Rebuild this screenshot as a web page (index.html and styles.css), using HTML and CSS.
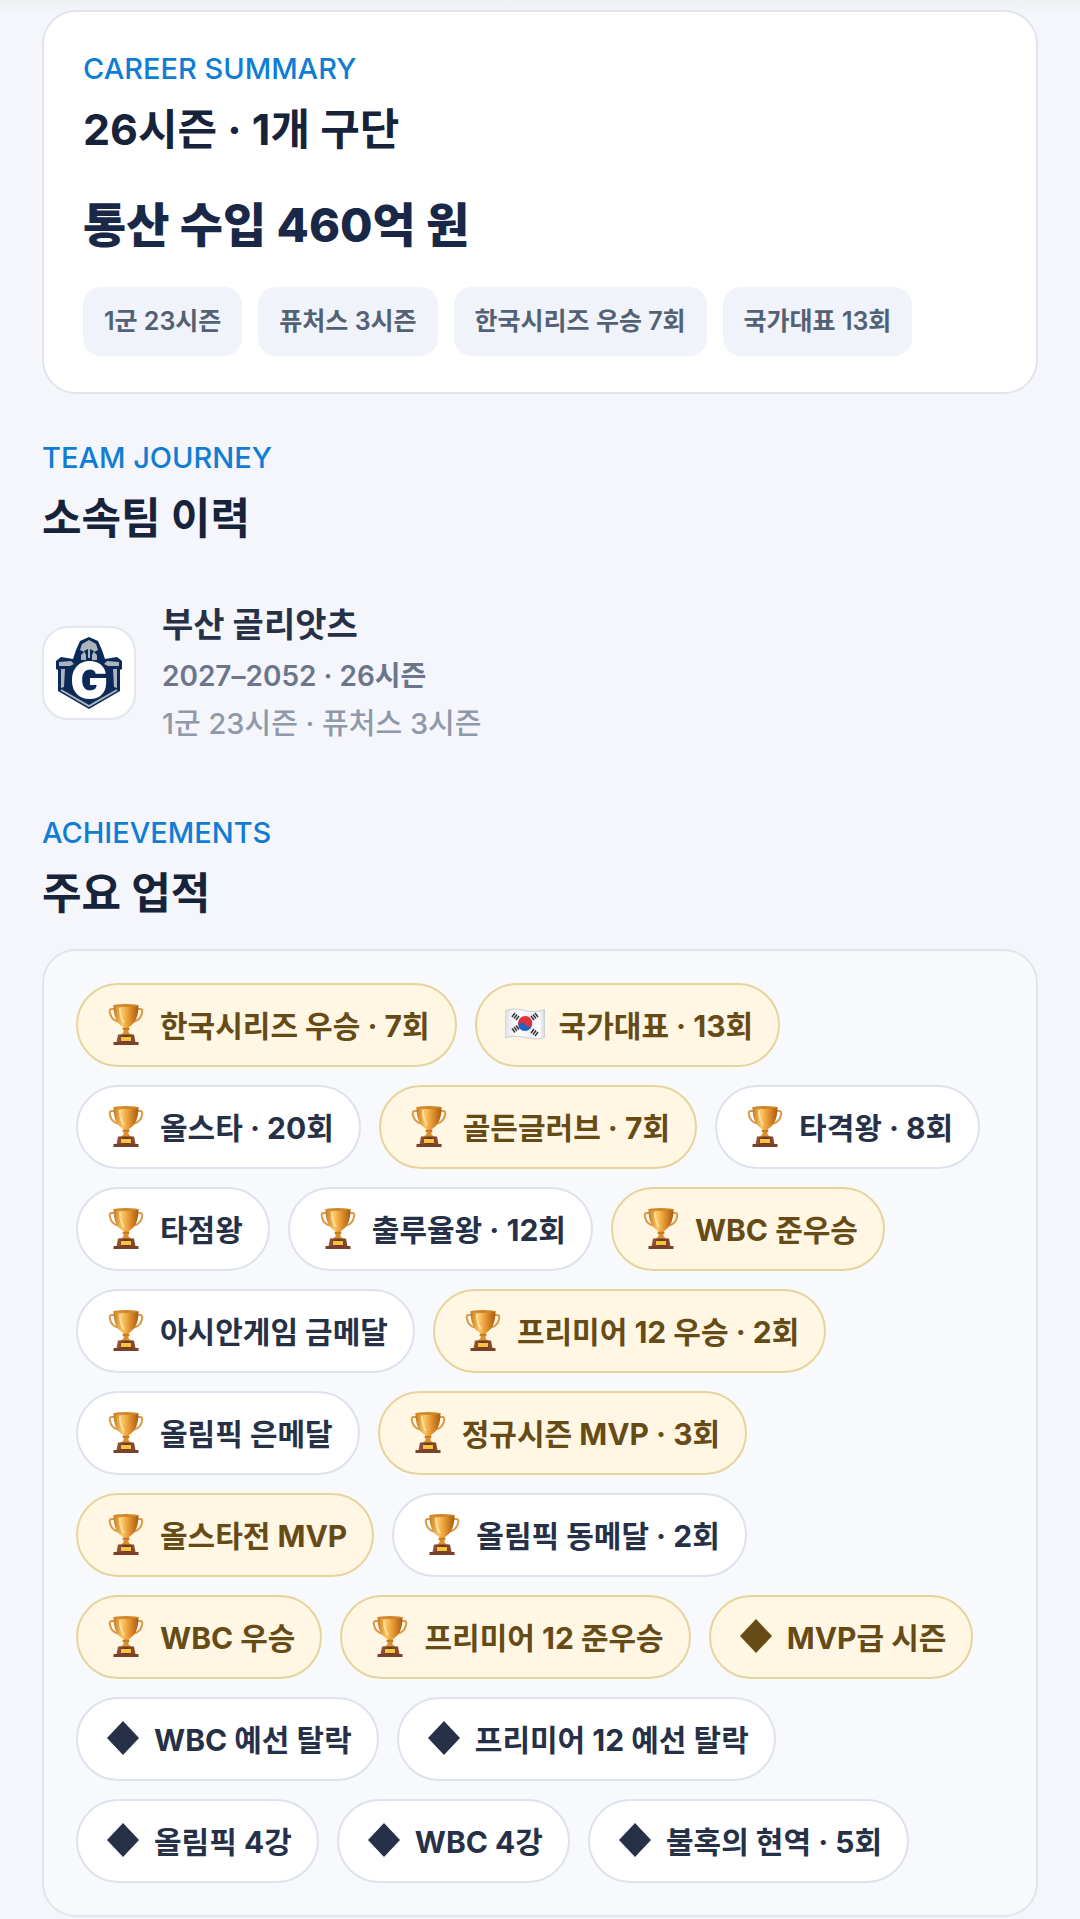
FILE: index.html
```html
<!DOCTYPE html>
<html lang="ko">
<head>
    <meta charset="UTF-8">
    <meta name="viewport" content="width=device-width, initial-scale=1.0">
    <title>커리어 요약</title>
    <link rel="stylesheet" href="styles.css">
</head>
<body>

    <!-- 아이콘 정의 -->
    <svg class="icon-defs" aria-hidden="true">
        <defs>
            <linearGradient id="gold" x1="0" x2="1" y1="0" y2="0">
                <stop offset="0" stop-color="#c47a22"/>
                <stop offset="0.35" stop-color="#fbc766"/>
                <stop offset="0.6" stop-color="#e89a35"/>
                <stop offset="1" stop-color="#a9590f"/>
            </linearGradient>
            <linearGradient id="base" x1="0" x2="1" y1="0" y2="0">
                <stop offset="0" stop-color="#9a5a3c"/>
                <stop offset="0.5" stop-color="#6b3420"/>
                <stop offset="1" stop-color="#8f4f33"/>
            </linearGradient>
            <linearGradient id="cloth" x1="0" x2="1" y1="0" y2="0">
                <stop offset="0" stop-color="#dfe1e6"/>
                <stop offset="0.3" stop-color="#ffffff"/>
                <stop offset="0.65" stop-color="#eceef2"/>
                <stop offset="0.85" stop-color="#ffffff"/>
                <stop offset="1" stop-color="#cfd2d8"/>
            </linearGradient>
        </defs>
        <symbol id="trophy" viewBox="0 0 40 44">
            <path d="M9 7H5.500C3.500 7 3.500 9 4 11C5 16 8 18.500 12 19.500M31 7H34.500C36.500 7 36.500 9 36 11C35 16 32 18.500 28 19.500" fill="none" stroke="#d99a4a" stroke-width="2"/>
            <path d="M7.500 3H32.500C32.500 13 30 20 25 23.500C22.500 25 22 27 22.500 30H17.500C18 27 17.500 25 15 23.500C10 20 7.500 13 7.500 3Z" fill="url(#gold)"/>
            <ellipse cx="20" cy="3.500" rx="12.500" ry="1.500" fill="#cf8628"/>
            <path d="M14 6C14 12 15 17 18 21" fill="none" stroke="#ffdf95" stroke-width="2"/>
            <ellipse cx="20" cy="27" rx="3.500" ry="1.500" fill="#c47a1d"/>
            <path d="M13.500 33C17 32 18 30 18.500 27.500H21.500C22 30 23 32 26.500 33Z" fill="#d98f30"/>
            <path d="M12 32.500H28L29.500 40H10.500Z" fill="url(#base)"/>
            <rect x="7.500" y="40" width="25" height="3" fill="#7b4029"/>
            <rect x="15" y="35" width="10" height="4" fill="#f3c43c"/>
        </symbol>
        <symbol id="flag" viewBox="0 0 40 32">
            <path d="M0 3C7 0 13 1 20 2.500C27 4 33 4 40 1.500V29C33 32 27 31 20 29.500C13 28 7 27.500 0 30Z" fill="url(#cloth)" stroke="#c9ccd2" stroke-width="1"/>
            <circle cx="20" cy="16" r="7" fill="#1f63c7"/>
            <path d="M13.500 13A7 7 0 0 1 27 17C25 20 21.500 19 20 16.500C18.500 14 15.500 13.500 13.300 17.500A7 7 0 0 1 13.500 13Z" fill="#e0313f"/>
            <g stroke="#33353b" stroke-width="1.500">
                <path d="M7 9L10 5M9 10.500L12 6.500M11 12L14 8"/>
                <path d="M26 8L29 12M28 6.500L31 10.500M30 5L33 9"/>
                <path d="M7 20.500L10 24.500M9 19L12 23M11 17.500L14 21.500"/>
                <path d="M26 25L29 21M28 26.500L31 22.500M30 28L33 24"/>
            </g>
        </symbol>
        <symbol id="diamond" viewBox="0 0 34 34">
            <path d="M17 0L33 17L17 34L1 17Z" fill="currentColor"/>
        </symbol>
    </svg>

    <main class="page">

        <!-- 커리어 요약 -->
        <section class="card summary">
            <p class="eyebrow">CAREER SUMMARY</p>
            <h1 class="title">26시즌 · 1개 구단</h1>
            <p class="income">통산 수입 460억 원</p>
            <ul class="tags">
                <li>1군 23시즌</li>
                <li>퓨처스 3시즌</li>
                <li>한국시리즈 우승 7회</li>
                <li>국가대표 13회</li>
            </ul>
        </section>

        <!-- 소속팀 이력 -->
        <section class="section">
            <p class="eyebrow">TEAM JOURNEY</p>
            <h2 class="title">소속팀 이력</h2>
            <div class="team">
                <div class="team-logo">
                    <svg viewBox="0 0 66 74" role="img" aria-label="부산 골리앗츠">
                        <path d="M33 1L42 5L46 14L49 23L61 21L66 25V33L64 34V55L33 73L2 55V34L0 33V25L5 21L17 23L20 14L24 5Z" fill="#0b2a57"/>
                        <path d="M33 4L40 8L42 14L38 16L41 19V24H36V19L38 15L34 13V22H32V13L28 15L30 19V24H25V19L28 16L24 14L26 8Z" fill="#aeb4bd"/>
                        <path d="M3 26L15 25L18 28L14 30L3 30ZM63 26L51 25L48 28L52 30L63 30Z" fill="#aeb4bd"/>
                        <path d="M5 33H9L8 51L5 52ZM61 33H57L58 51L61 52Z" fill="#aeb4bd"/>
                        <path d="M5 54L33 70L61 54" fill="none" stroke="#aeb4bd" stroke-width="2"/>
                        <text x="33" y="62" text-anchor="middle">G</text>
                    </svg>
                </div>
                <div class="team-info">
                    <h3>부산 골리앗츠</h3>
                    <p class="years">2027–2052 · 26시즌</p>
                    <p class="detail">1군 23시즌 · 퓨처스 3시즌</p>
                </div>
            </div>
        </section>

        <!-- 주요 업적 -->
        <section class="section">
            <p class="eyebrow">ACHIEVEMENTS</p>
            <h2 class="title">주요 업적</h2>
            <ul class="card badges">
                <li class="badge gold"><svg class="trophy"><use href="#trophy"/></svg>한국시리즈 우승 · 7회</li>
                <li class="badge gold"><svg class="flag"><use href="#flag"/></svg>국가대표 · 13회</li>
                <li class="badge"><svg class="trophy"><use href="#trophy"/></svg>올스타 · 20회</li>
                <li class="badge gold"><svg class="trophy"><use href="#trophy"/></svg>골든글러브 · 7회</li>
                <li class="badge"><svg class="trophy"><use href="#trophy"/></svg>타격왕 · 8회</li>
                <li class="badge"><svg class="trophy"><use href="#trophy"/></svg>타점왕</li>
                <li class="badge"><svg class="trophy"><use href="#trophy"/></svg>출루율왕 · 12회</li>
                <li class="badge gold"><svg class="trophy"><use href="#trophy"/></svg>WBC 준우승</li>
                <li class="badge"><svg class="trophy"><use href="#trophy"/></svg>아시안게임 금메달</li>
                <li class="badge gold"><svg class="trophy"><use href="#trophy"/></svg>프리미어 12 우승 · 2회</li>
                <li class="badge"><svg class="trophy"><use href="#trophy"/></svg>올림픽 은메달</li>
                <li class="badge gold"><svg class="trophy"><use href="#trophy"/></svg>정규시즌 MVP · 3회</li>
                <li class="badge gold"><svg class="trophy"><use href="#trophy"/></svg>올스타전 MVP</li>
                <li class="badge"><svg class="trophy"><use href="#trophy"/></svg>올림픽 동메달 · 2회</li>
                <li class="badge gold"><svg class="trophy"><use href="#trophy"/></svg>WBC 우승</li>
                <li class="badge gold"><svg class="trophy"><use href="#trophy"/></svg>프리미어 12 준우승</li>
                <li class="badge gold"><svg class="diamond"><use href="#diamond"/></svg>MVP급 시즌</li>
                <li class="badge"><svg class="diamond"><use href="#diamond"/></svg>WBC 예선 탈락</li>
                <li class="badge"><svg class="diamond"><use href="#diamond"/></svg>프리미어 12 예선 탈락</li>
                <li class="badge"><svg class="diamond"><use href="#diamond"/></svg>올림픽 4강</li>
                <li class="badge"><svg class="diamond"><use href="#diamond"/></svg>WBC 4강</li>
                <li class="badge"><svg class="diamond"><use href="#diamond"/></svg>불혹의 현역 · 5회</li>
            </ul>
        </section>

    </main>

</body>
</html>
```
FILE: styles.css
```css
* {
    box-sizing: border-box;
    margin: 0;
    padding: 0;
}

body {
    font-family: Inter, "Noto Sans CJK KR", sans-serif;
    background: #f4f6fb;
    color: #263147;
}

ul {
    list-style: none;
}

.icon-defs {
    position: absolute;
    width: 0;
    height: 0;
}

.page {
    padding: 10px 42px 0;
    background: linear-gradient(#eff1f5, #f4f6fb 16px);
}

.card {
    border: 2px solid #e1e4eb;
    border-radius: 34px;
}

.eyebrow {
    font-size: 29px;
    font-weight: 500;
    line-height: 36px;
    color: #0f7dd4;
}

.title {
    margin-top: 12px;
    font-size: 43px;
    font-weight: 700;
    line-height: 60px;
    color: #17233b;
}

/* 커리어 요약 */
.summary {
    background: #fff;
    padding: 39px 39px 36px;
}

.income {
    margin-top: 32px;
    font-size: 47px;
    font-weight: 800;
    line-height: 68px;
    color: #1a2848;
}

.tags {
    display: flex;
    flex-wrap: wrap;
    gap: 16px;
    margin-top: 28px;
}

.tags li {
    padding: 16px 21px;
    border-radius: 18px;
    background: #f0f3f9;
    font-size: 25px;
    font-weight: 600;
    line-height: 37px;
    color: #536175;
}

/* 섹션 공통 */
.section {
    margin-top: 46px;
}

/* 소속팀 */
.team {
    display: flex;
    align-items: center;
    gap: 26px;
    margin-top: 50px;
    padding-bottom: 21px;
}

.team-logo {
    display: flex;
    align-items: center;
    justify-content: center;
    width: 94px;
    height: 94px;
    border: 2px solid #e1e6ef;
    border-radius: 26px;
    background: #fff;
}

.team-logo svg {
    width: 66px;
    height: 74px;
}

.team-logo text {
    font-size: 50px;
    font-weight: 900;
    fill: #fff;
}

.team-info h3 {
    font-size: 34px;
    font-weight: 700;
    line-height: 54px;
}

.years {
    font-size: 28px;
    font-weight: 600;
    line-height: 48px;
    color: #6b768b;
}

.detail {
    font-size: 29px;
    font-weight: 500;
    line-height: 48px;
    color: #8f99aa;
}

/* 업적 */
.badges {
    display: flex;
    flex-wrap: wrap;
    gap: 18px;
    margin-top: 26px;
    padding: 32px;
    background: #f8f9fd;
}

.badge {
    display: flex;
    align-items: center;
    gap: 14px;
    height: 84px;
    padding: 0 25px 3px 28px;
    border: 2px solid #dee2ec;
    border-radius: 42px;
    background: #fff;
    font-size: 30px;
    font-weight: 700;
    white-space: nowrap;
}

.badge.gold {
    border-color: #e6d49c;
    background: #fff7e4;
    color: #674b16;
}

.trophy {
    width: 40px;
    height: 44px;
}

.flag {
    width: 40px;
    height: 32px;
}

.diamond {
    width: 34px;
    height: 34px;
}
```
